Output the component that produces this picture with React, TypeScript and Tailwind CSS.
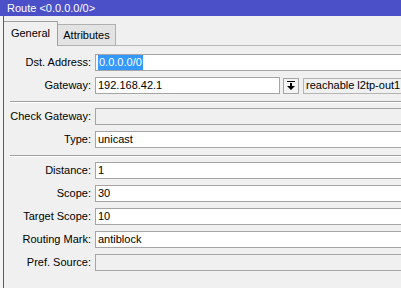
import React from "react";

function Box({
  children,
  w,
  gray,
}: {
  children?: React.ReactNode;
  w: string;
  gray?: boolean;
}) {
  return (
    <div
      className={`${w} h-[17px] shrink-0 border border-[#a5a5a5] ${
        gray ? "bg-[#f0f0f0]" : "bg-white"
      } pl-[2px] flex items-center leading-none whitespace-nowrap overflow-hidden`}
    >
      {children}
    </div>
  );
}

function Row({ label, children }: { label: string; children: React.ReactNode }) {
  return (
    <div className="flex items-center h-[17px]">
      <div className="w-[88px] shrink-0 text-right pr-[1px] leading-none whitespace-nowrap">
        {label}
      </div>
      <div className="ml-[3px] flex items-center">{children}</div>
    </div>
  );
}

function Sep() {
  return (
    <div className="ml-[6px] mt-[7px] mb-[5px] h-[2px] border-t border-[#a0a0a0] border-b border-b-white" />
  );
}

export default function App() {
  return (
    <div className="w-[401px] h-[288px] overflow-hidden bg-[#f0f0f0] text-black text-[11px] font-['Liberation_Sans',Arial,sans-serif] flex flex-col">
      <div className="h-[16px] shrink-0 bg-[#4b50c8] text-white text-[11px] pl-[7px] flex items-center leading-none">
        Route &lt;0.0.0.0/0&gt;
      </div>
      <div className="flex flex-1">
        <div className="w-[3px] shrink-0 bg-[#f4f4f4]" />
        <div className="w-[1px] shrink-0 bg-[#5a5a5a]" />
        <div className="flex-1 flex flex-col">
          <div className="h-[30px] shrink-0 flex items-end">
            <div className="w-[54px] h-[25px] shrink-0 border-t border-r border-[#a0a0a0] bg-[#f0f0f0] flex items-center justify-center pb-[2px] leading-none">
              General
            </div>
            <div className="w-[58px] h-[22px] shrink-0 border-t border-r border-b border-[#b0b0b0] bg-[#e3e3e3] flex items-center justify-center leading-none">
              Attributes
            </div>
            <div className="flex-1 h-[1px] bg-[#b8b8b8]" />
          </div>
          <div className="pt-[8px] flex flex-col">
            <div className="flex flex-col gap-[6px]">
              <Row label="Dst. Address:">
                <Box w="w-[320px]">
                  <span className="bg-[#3399ff] text-white px-[1px] py-[2px]">0.0.0.0/0</span>
                </Box>
              </Row>
              <Row label="Gateway:">
                <Box w="w-[185px]">192.168.42.1</Box>
                <div className="ml-[3px] w-[16px] h-[16px] shrink-0 border border-[#a5a5a5] bg-[#f4f4f4] flex items-center justify-center">
                  <svg width="8" height="9" viewBox="0 0 8 9">
                    <rect x="0" y="0" width="8" height="1" fill="#000" />
                    <rect x="3" y="2" width="2" height="3" fill="#000" />
                    <polygon points="0,5 8,5 4,9" fill="#000" />
                  </svg>
                </div>
                <div className="ml-[4px] w-[120px] h-[16px] shrink-0 border border-[#b5b5b5] bg-[#f0f0f0] pl-[2px] flex items-center leading-none whitespace-nowrap">
                  reachable l2tp-out1
                </div>
              </Row>
            </div>
            <Sep />
            <div className="flex flex-col gap-[6px]">
              <Row label="Check Gateway:">
                <Box w="w-[320px]" gray />
              </Row>
              <Row label="Type:">
                <Box w="w-[320px]">unicast</Box>
              </Row>
            </div>
            <Sep />
            <div className="flex flex-col gap-[6px]">
              <Row label="Distance:">
                <Box w="w-[320px]">1</Box>
              </Row>
              <Row label="Scope:">
                <Box w="w-[320px]">30</Box>
              </Row>
              <Row label="Target Scope:">
                <Box w="w-[320px]">10</Box>
              </Row>
              <Row label="Routing Mark:">
                <Box w="w-[320px]">antiblock</Box>
              </Row>
              <Row label="Pref. Source:">
                <Box w="w-[320px]" gray />
              </Row>
            </div>
          </div>
        </div>
      </div>
    </div>
  );
}
